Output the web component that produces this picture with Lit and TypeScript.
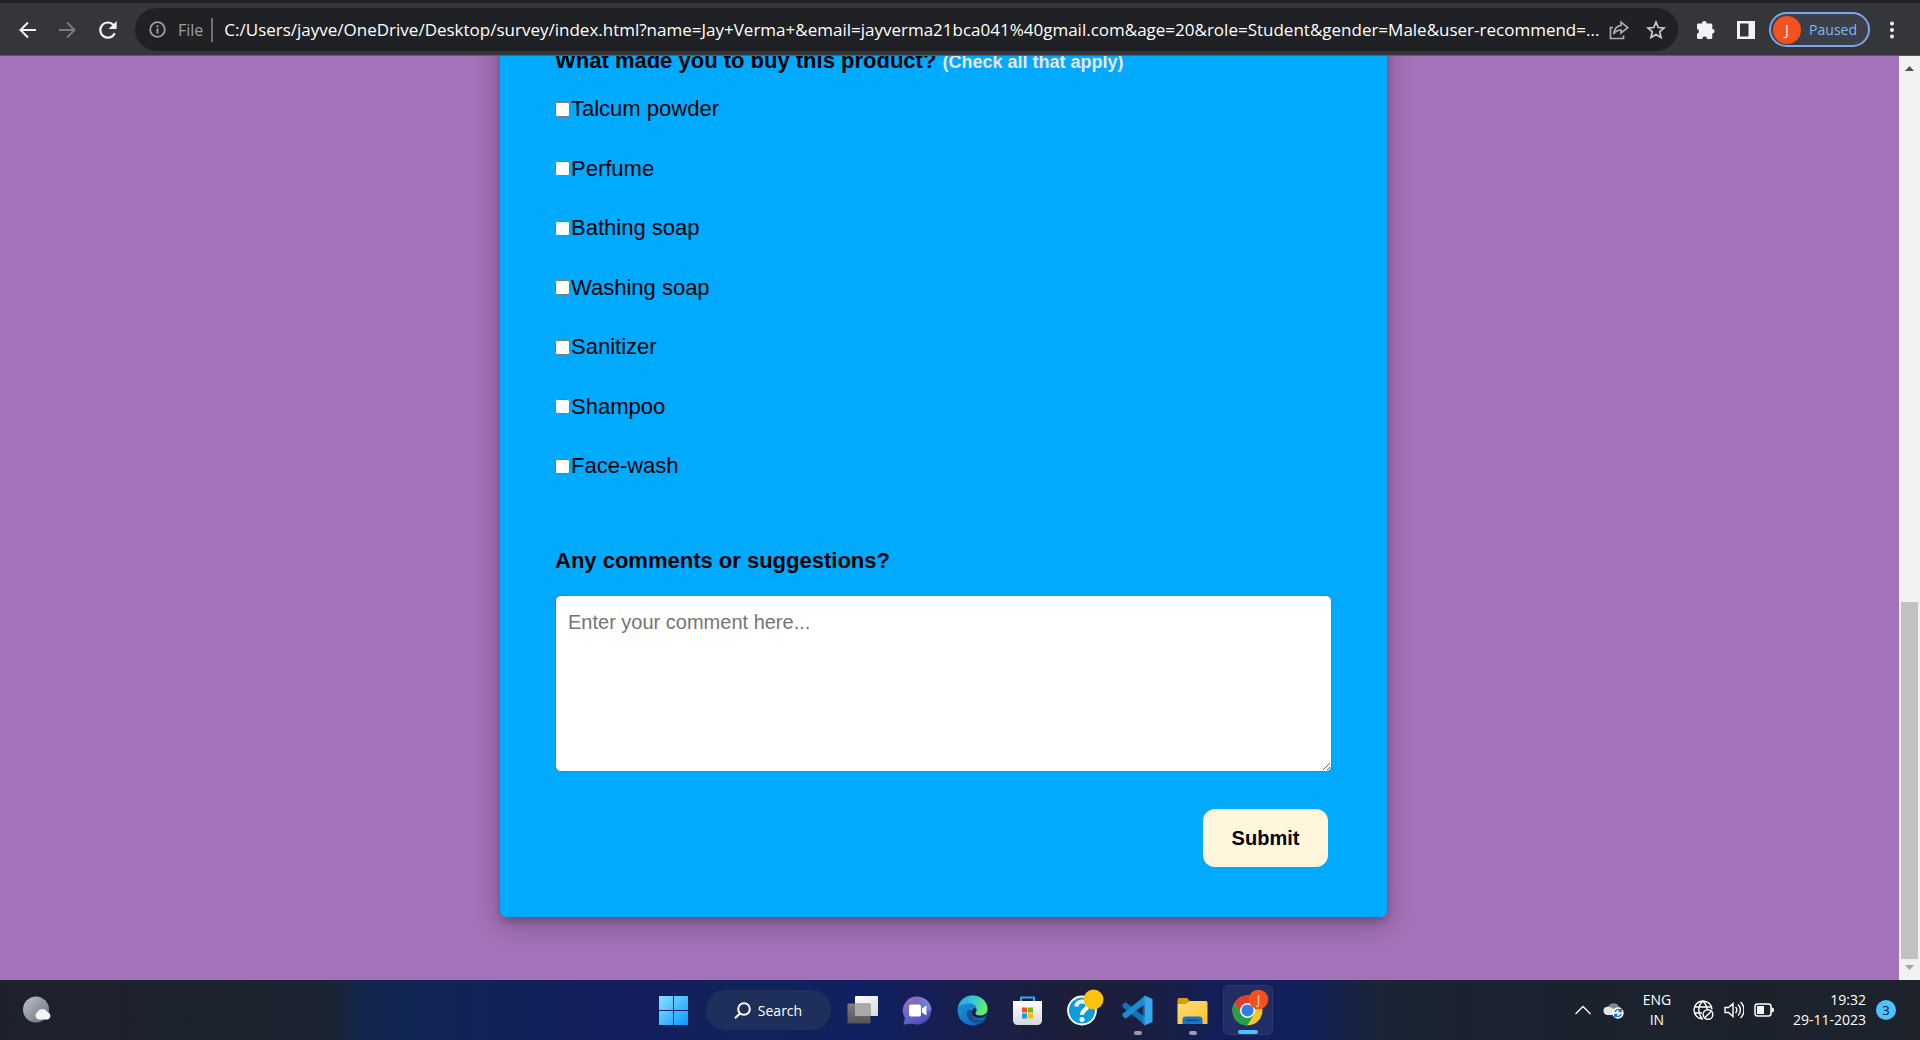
import { LitElement, html, svg, css } from "lit";
import { customElement } from "lit/decorators.js";

const OPTIONS = ["Talcum powder", "Perfume", "Bathing soap", "Washing soap", "Sanitizer", "Shampoo", "Face-wash"];
const ADDRESS =
  "C:/Users/jayve/OneDrive/Desktop/survey/index.html?name=Jay+Verma+&email=jayverma21bca041%40gmail.com&age=20&role=Student&gender=Male&user-recommend=...";

@customElement("browser-toolbar")
class BrowserToolbar extends LitElement {
  static styles = css`
    :host {
      display: block;
      font-family: "Open Sans", "Noto Sans", sans-serif;
    }
    .bar {
      display: flex;
      align-items: center;
      height: 56px;
      box-sizing: border-box;
      padding: 1px 12px 0 8px;
      background: #35363a;
      border-top: 3px solid #202124;
      border-bottom: 1px solid #5b5c5f;
    }
    button {
      display: flex;
      align-items: center;
      justify-content: center;
      width: 40px;
      height: 40px;
      flex: none;
      padding: 0;
      border: 0;
      background: none;
      font: inherit;
    }
    .address {
      flex: 1;
      min-width: 0;
      display: flex;
      align-items: center;
      height: 43px;
      margin: 0 8px 0 7px;
      padding: 0 2px 0 14px;
      border-radius: 22px;
      background: #202124;
    }
    .info {
      flex: none;
    }
    .scheme {
      margin-left: 12px;
      padding-right: 8px;
      border-right: 2px solid #6f7175;
      color: #9aa0a6;
      font-size: 16px;
      line-height: 24px;
    }
    .url {
      flex: 1;
      min-width: 0;
      height: 32px;
      margin-left: 11px;
      padding: 0;
      border: 0;
      outline: 0;
      background: none;
      color: #fff;
      font: 17px/32px "Open Sans", "Noto Sans", sans-serif;
    }
    .share {
      width: 34px;
    }
    .nav {
      display: flex;
    }
    .profile {
      width: 101px;
      height: 35px;
      margin: 0 6px 0 3px;
      padding: 0 11px 0 2px;
      justify-content: space-between;
      border: 2px solid #7ea6ee;
      border-radius: 18px;
      background: #3b3f49;
      color: #8ab4f8;
      font-size: 14px;
    }
    .avatar {
      display: grid;
      place-items: center;
      width: 28px;
      height: 28px;
      border-radius: 50%;
      background: #f4511e;
      color: #fff;
      font-size: 14px;
    }
    .menu {
      width: 32px;
    }
  `;

  render() {
    return html`
      <header class="bar">
        <nav class="nav">
          <button aria-label="Back">
            <svg width="20" height="20" viewBox="0 0 20 20" fill="none" stroke="#f1f3f4" stroke-width="2">
              <path d="M18 10H3M10 2.500 2.500 10l7.500 7.500" />
            </svg>
          </button>
          <button aria-label="Forward">
            <svg width="20" height="20" viewBox="0 0 20 20" fill="none" stroke="#797b7f" stroke-width="2">
              <path d="M1 10h15M9 2.500 16.500 10 9 17.500" />
            </svg>
          </button>
          <button aria-label="Reload">
            <svg width="20" height="20" viewBox="0 0 20 20">
              <path d="M16.800 13.200A7.600 7.600 0 1 1 15.500 5" fill="none" stroke="#f1f3f4" stroke-width="2.200" />
              <path d="M18.600 1v8h-8z" fill="#f1f3f4" />
            </svg>
          </button>
        </nav>
        <div class="address">
          <svg class="info" width="17" height="17" viewBox="0 0 17 17" fill="none" stroke="#9aa0a6" stroke-width="2">
            <circle cx="8.500" cy="8.500" r="7.300" stroke-width="1.800" />
            <path d="M8.500 7.500v5M8.500 4.300v2" />
          </svg>
          <span class="scheme">File</span>
          <input class="url" type="text" aria-label="Address" .value=${ADDRESS} />
          <button class="share" aria-label="Share">
            <svg width="20" height="20" viewBox="0 0 20 20" fill="none" stroke="#a8abaf" stroke-width="1.700">
              <path d="M4 7.500H1.500V18.500H14.500V15.500" />
              <path d="M12 2.200 18.700 7.600 12 13V10C8.500 10 6.500 11.200 4.700 14 5.300 9.500 7.500 6 12 5.400z" />
            </svg>
          </button>
          <button aria-label="Bookmark">
            <svg width="20" height="20" viewBox="0 0 20 20" fill="none" stroke="#c9cbce" stroke-width="1.700">
              <path d="M10 2.200l2.300 5.300 5.700.5-4.300 3.800 1.300 5.600-5-3-5 3 1.300-5.600L2 8l5.700-.5z" />
            </svg>
          </button>
        </div>
        <button aria-label="Extensions">
          <svg width="20" height="20" viewBox="0 0 20 20" fill="#f1f3f4">
            <path d="M8.300 1a2.300 2.300 0 0 1 2.300 2.500h4.200c.9 0 1.500.7 1.500 1.500v3.900a2.300 2.300 0 0 1 0 4.600v4c0 .9-.6 1.500-1.500 1.500h-3.700a2.400 2.400 0 0 0-4.800 0H2.500c-.9 0-1.500-.6-1.500-1.500v-3.700a2.400 2.400 0 0 0 0-4.700V5c0-.8.6-1.500 1.500-1.500H6A2.300 2.300 0 0 1 8.300 1z" />
          </svg>
        </button>
        <button aria-label="Side panel">
          <svg width="18" height="18" viewBox="0 0 18 18" fill="#f1f3f4" fill-rule="evenodd">
            <path d="M0 0h18v18H0zM3 2.500v13h8.500v-13z" />
          </svg>
        </button>
        <button class="profile"><span class="avatar">J</span>Paused</button>
        <button class="menu" aria-label="More">
          <svg width="4" height="18" viewBox="0 0 4 18" fill="#f1f3f4">
            <circle cx="2" cy="2.500" r="2" /><circle cx="2" cy="9" r="2" /><circle cx="2" cy="15.500" r="2" />
          </svg>
        </button>
      </header>
    `;
  }
}

@customElement("survey-page")
class SurveyPage extends LitElement {
  static styles = css`
    :host {
      display: flex;
      background: #a472b8;
      font-family: "Liberation Sans", Arial, sans-serif;
      color: #000;
    }
    .view {
      flex: 1;
      min-width: 0;
      overflow: hidden;
      display: grid;
      grid-template-columns: 500fr 887fr 512fr;
      align-content: end;
    }
    .card {
      grid-column: 2;
      box-sizing: border-box;
      margin: 0 0 63px;
      padding: 40px 55px 50px;
      border-radius: 6px;
      background: #00aaff;
      box-shadow: 0 4px 8px rgba(0, 0, 0, 0.2), 0 8px 28px rgba(0, 0, 0, 0.24);
    }
    fieldset {
      min-width: 0;
      margin: 0;
      padding: 0;
      border: 0;
    }
    .question {
      display: block;
      padding: 0;
      font-size: 22px;
      line-height: 28px;
      font-weight: 700;
    }
    .hint {
      font-size: 18px;
      color: #e6e6e6;
    }
    .options {
      display: grid;
      align-content: space-between;
      min-height: 385px;
      margin: 19px 0 67px;
    }
    .option {
      display: flex;
      align-items: center;
      gap: 1px;
      font-size: 22px;
      line-height: 28px;
    }
    .option input {
      width: 15px;
      height: 15px;
      margin: 0;
    }
    textarea {
      display: block;
      box-sizing: border-box;
      width: 100%;
      height: 177px;
      margin: 20px 0 37px;
      padding: 12px;
      border: 1px solid #767676;
      border-radius: 6px;
      background: #fff;
      font: 20px/28px "Liberation Sans", Arial, sans-serif;
      resize: both;
    }
    textarea::placeholder {
      color: #757575;
    }
    .actions {
      display: flex;
      justify-content: flex-end;
      padding-right: 4px;
    }
    .submit {
      width: 125px;
      height: 58px;
      border: 0;
      border-radius: 12px;
      background: #fff6dc;
      color: #000;
      font: 700 20px/28px "Liberation Sans", Arial, sans-serif;
    }
    .scroll {
      display: flex;
      flex-direction: column;
      align-items: center;
      width: 21px;
      box-sizing: border-box;
      padding: 10px 0;
      background: #f1f1f1;
    }
    .track {
      flex: 1;
      width: 17px;
      display: grid;
      grid-template-rows: 119fr 81fr;
      margin: 6px 0;
    }
    .thumb {
      grid-row: 2;
      background: #c1c1c1;
    }
  `;

  render() {
    return html`
      <main class="view">
        <form class="card" @submit=${(e: Event) => e.preventDefault()}>
          <fieldset>
            <legend class="question">
              What made you to buy this product? <span class="hint">(Check all that apply)</span>
            </legend>
            <div class="options">
              ${OPTIONS.map(
                (name) => html`<label class="option"><input type="checkbox" name="prefer" value=${name} />${name}</label>`
              )}
            </div>
          </fieldset>
          <label class="question" for="comments">Any comments or suggestions?</label>
          <textarea id="comments" placeholder="Enter your comment here..."></textarea>
          <div class="actions"><button class="submit" type="submit">Submit</button></div>
        </form>
      </main>
      <div class="scroll" aria-hidden="true">
        <svg width="9" height="5" viewBox="0 0 9 5"><path d="M0 5 4.500 0 9 5z" fill="#505050" /></svg>
        <div class="track"><div class="thumb"></div></div>
        <svg width="9" height="5" viewBox="0 0 9 5"><path d="M0 0 4.500 5 9 0z" fill="#a3a3a3" /></svg>
      </div>
    `;
  }
}

const windowsIcon = svg`
  <defs><linearGradient id="win" x1="0" y1="0" x2="1" y2="1"><stop offset="0" stop-color="#8be0ff"/><stop offset="1" stop-color="#0a9bff"/></linearGradient></defs>
  <path fill="url(#win)" d="M1 1h14v14H1zM16 1h14v14H16zM1 16h14v14H1zM16 16h14v14H16z"/>`;

const taskViewIcon = svg`
  <defs>
    <linearGradient id="tvb" x1="0" y1="0" x2="0" y2="1"><stop offset="0" stop-color="#7d7d7d"/><stop offset="1" stop-color="#555"/></linearGradient>
    <linearGradient id="tvf" x1="0" y1="0" x2="1" y2="1"><stop offset="0" stop-color="#fff"/><stop offset="1" stop-color="#dadada"/></linearGradient>
  </defs>
  <rect x="8" y="1" width="23" height="20" rx="1" fill="url(#tvf)"/>
  <rect x="0.500" y="8.500" width="23" height="20" rx="1" fill="url(#tvb)"/>
  <rect x="8" y="8.500" width="15.500" height="12.500" fill="#a9a9a9"/>`;

const chatIcon = svg`
  <defs><linearGradient id="chat" x1="0.100" y1="0" x2="0.700" y2="1"><stop offset="0" stop-color="#9a6fb5"/><stop offset="0.500" stop-color="#6a68c8"/><stop offset="1" stop-color="#4f4bb8"/></linearGradient>
  <linearGradient id="chat2" x1="0" y1="0" x2="1" y2="0"><stop offset="0" stop-color="#7b9bea" stop-opacity="0"/><stop offset="1" stop-color="#7ba0f0" stop-opacity=".7"/></linearGradient></defs>
  <path fill="url(#chat)" d="M15.500 1.500a14 14 0 1 1-5 27.200L1.500 29.500l1.500-6.500A14 14 0 0 1 15.500 1.500z"/>
  <path fill="url(#chat2)" d="M15.500 1.500a14 14 0 0 1 14 14H15.500z"/>
  <rect x="7" y="9.500" width="12" height="12" rx="2" fill="#fff"/>
  <path fill="#fff" d="M20 13.500 24.500 10.500v10L20 17.500z"/>`;

const edgeIcon = svg`
  <defs>
    <linearGradient id="e1" x1="0" y1="0" x2="1" y2="0.400"><stop offset="0" stop-color="#2b9fe0"/><stop offset="0.500" stop-color="#35c1d8"/><stop offset="1" stop-color="#66eb6e"/></linearGradient>
    <linearGradient id="e2" x1="0" y1="0" x2="0.700" y2="1"><stop offset="0" stop-color="#1b9de2"/><stop offset="1" stop-color="#1163c0"/></linearGradient>
  </defs>
  <circle cx="15.500" cy="15.500" r="15" fill="url(#e2)"/>
  <path fill="url(#e1)" d="M1 12C3 4.500 9 .5 15.500.5c9 0 15 6.500 15 13 0 4.500-3.300 7-7.300 7-3.700 0-5.200-1.500-5.200-2.500 0-.8 1.600-1.500 1.600-4.200 0-3.300-3.600-5.300-7.300-5.300C7.500 8.500 3 10 1 12z"/>
  <path fill="#174f93" d="M10 17c-1 7 5 11.500 11 11.500 3.500 0 6-1.500 7.700-4.500-3 1.500-7 1.500-10 0-3-1.500-4.700-4-3.700-8-2.500-2-4.500-1-5 1z"/>
  <path fill="#141c3c" d="M28.300 21.500c-4.800 2.600-11.800 1.500-13.300-2.500-.8-2.400.4-4.400 1.700-5.800 2.600-.4 3.800 1.300 1.900 4.300-1 1.700 1 3.300 4.600 3.300 3.300 0 5.500-1.300 7.500-3.700z"/>`;

const storeIcon = svg`
  <defs><linearGradient id="bag" x1="0" y1="0" x2="0" y2="1"><stop offset="0" stop-color="#fff"/><stop offset="1" stop-color="#d5d7da"/></linearGradient></defs>
  <path fill="none" stroke="#2aa9ee" stroke-width="2" d="M9 7V2.500h13V7"/>
  <path fill="url(#bag)" d="M1 6h29v19.500a4.500 4.500 0 0 1-4.500 4.500h-20A4.500 4.500 0 0 1 1 25.500z"/>
  <path fill="#f25022" d="M10 12.500h5v5h-5z"/><path fill="#7fba00" d="M16 12.500h5v5h-5z"/>
  <path fill="#00a4ef" d="M10 18.500h5v5h-5z"/><path fill="#ffb900" d="M16 18.500h5v5h-5z"/>`;

const helpIcon = svg`
  <circle cx="15" cy="15.500" r="14" fill="#0d9bdc" stroke="#fff" stroke-width="1.800"/>
  <path fill="none" stroke="#fff" stroke-width="4" d="M9.500 11.500c0-3.500 2.500-5 5.500-5s5.500 1.500 5.500 4.200c0 4-5.500 4-5.500 9"/>
  <circle cx="15" cy="24.500" r="2.500" fill="#fff"/>
  <circle cx="26.500" cy="4.500" r="10" fill="#ffc20e"/>`;

const codeIcon = svg`
  <path fill="#1173b8" d="M.5 9.500 3.500 7 23.500 22.500v8L.8 12.200z"/>
  <path fill="#1b8bd4" d="M.5 21 3.500 23.800 23.500 8.500V.5L.8 18.600z"/>
  <path fill="#36a6ee" d="M22.500.5 30.500 4v23l-8 3.500z"/>
  <path fill="#2496e2" d="M22.500.5 20.500 3v25l2 2.500z" opacity=".5"/>`;

const folderIcon = svg`
  <defs><linearGradient id="fold" x1="0" y1="0" x2="1" y2="1"><stop offset="0" stop-color="#ffe07a"/><stop offset="1" stop-color="#fcc02c"/></linearGradient></defs>
  <path fill="#dd9b08" d="M.5 4.500A1.500 1.500 0 0 1 2 3h8l3 3h-1l-2 3H.5z"/>
  <path fill="url(#fold)" d="M.5 9H9l3.500-3H29a1.500 1.500 0 0 1 1.500 1.500V29H.5z"/>
  <path fill="#1376cc" d="M5.500 29v-4.500a3 3 0 0 1 3-3h14a3 3 0 0 1 3 3V29z"/>
  <path stroke="#0b4f93" stroke-width="1.500" d="M9 25.300h13"/>`;

const chromeIcon = svg`
  <circle cx="15.500" cy="15.500" r="15" fill="#fbc727"/>
  <path fill="#e33b2e" d="M2.500 8A15 15 0 0 1 28.500 8H15.500L9 19.200z"/>
  <path fill="#2a9d4c" d="M2.500 8A15 15 0 0 0 15.500 30.500L22 19.200H9z"/>
  <circle cx="15.500" cy="15.500" r="7.500" fill="#fff"/><circle cx="15.500" cy="15.500" r="6" fill="#2f7de9"/>
  <circle cx="26.500" cy="4.500" r="9.800" fill="#f4511e"/>
  <text x="26.500" y="9" text-anchor="middle" font-size="12" fill="#ffd9cc">J</text>`;

const APPS = [
  { name: "Task view", icon: taskViewIcon, state: "" },
  { name: "Chat", icon: chatIcon, state: "" },
  { name: "Edge", icon: edgeIcon, state: "" },
  { name: "Store", icon: storeIcon, state: "" },
  { name: "Get help", icon: helpIcon, state: "" },
  { name: "Code", icon: codeIcon, state: "open" },
  { name: "Files", icon: folderIcon, state: "open" },
  { name: "Chrome", icon: chromeIcon, state: "active" },
];

@customElement("desktop-taskbar")
class DesktopTaskbar extends LitElement {
  static styles = css`
    :host {
      display: block;
      font-family: "Open Sans", "Noto Sans", sans-serif;
      color: #fff;
    }
    .bar {
      display: grid;
      grid-template-columns: 1fr auto 1fr;
      align-items: center;
      height: 60px;
      background: linear-gradient(
        90deg,
        #1e212b 0%,
        #1b222e 10%,
        #1b2531 17%,
        #11264f 19%,
        #112357 25%,
        #131d5e 33%,
        #11245a 39%,
        #101f62 45%,
        #171e4e 50%,
        #1c1f38 56%,
        #191e42 60%,
        #101f5c 64%,
        #12215a 68%,
        #1a2535 72%,
        #1a2230 76%,
        #1d222b 100%
      );
    }
    button {
      display: flex;
      align-items: center;
      justify-content: center;
      flex: none;
      padding: 0;
      border: 0;
      background: none;
      color: inherit;
      font: inherit;
    }
    .weather {
      margin-left: 22px;
    }
    .apps {
      display: flex;
      align-items: center;
      gap: 5px;
      padding-left: 1px;
    }
    .app {
      position: relative;
      box-sizing: border-box;
      width: 50px;
      height: 50px;
      border-radius: 6px;
    }
    .app svg {
      overflow: visible;
    }
    .app.active {
      background: #222d63;
      border: 1px solid #2f3a6c;
    }
    .app.open::after,
    .app.active::after {
      content: "";
      position: absolute;
      bottom: 0;
      width: 8px;
      height: 4px;
      border-radius: 2px;
      background: #9a9cae;
    }
    .app.active::after {
      width: 20px;
      background: #4cc2ff;
    }
    .search {
      gap: 7px;
      width: 125px;
      height: 40px;
      margin: 0 2px;
      border-radius: 20px;
      background: #1f2f5c;
      font-size: 14px;
    }
    .tray {
      display: flex;
      align-items: center;
      justify-content: flex-end;
      padding-right: 24px;
      font-size: 14px;
      line-height: 20px;
    }
    .cloud {
      margin-left: 12px;
    }
    .lang {
      width: 44px;
      margin: 0 14px 0 11px;
      text-align: center;
    }
    .status {
      gap: 10px;
      margin-right: 19px;
    }
    .clock {
      display: block;
      text-align: right;
    }
    .count {
      display: grid;
      place-items: center;
      width: 20px;
      height: 20px;
      margin-left: 10px;
      border-radius: 50%;
      background: #4cc2ff;
      color: #10202c;
      font-size: 13px;
    }
  `;

  render() {
    return html`
      <footer class="bar">
        <div>
          <button class="weather" aria-label="Weather">
            <svg width="30" height="28" viewBox="0 0 30 28">
              <defs>
                <linearGradient id="moon" x1="0" y1="0" x2="1" y2="1">
                  <stop offset="0" stop-color="#b9c2cc" /><stop offset="1" stop-color="#66707c" />
                </linearGradient>
              </defs>
              <circle cx="14" cy="13.500" r="13" fill="url(#moon)" />
              <path fill="#f2f4f7" d="M16 23.500a4.500 4.500 0 0 1 0-8 5.500 5.500 0 0 1 9.500.5 4 4 0 0 1 .5 7.500z" />
            </svg>
          </button>
        </div>
        <nav class="apps">
          <button class="app" aria-label="Start"><svg width="31" height="31" viewBox="0 0 31 31">${windowsIcon}</svg></button>
          <button class="search">
            <svg width="17" height="17" viewBox="0 0 17 17" fill="none" stroke="#fff" stroke-width="2">
              <circle cx="10" cy="7" r="5.800" /><path d="M6 11.500 1 16.300" />
            </svg>
            Search
          </button>
          ${APPS.map(
            (app) => html`<button class="app ${app.state}" aria-label=${app.name}>
              <svg width="31" height="31" viewBox="0 0 31 31">${app.icon}</svg>
            </button>`
          )}
        </nav>
        <div class="tray">
          <button aria-label="Show hidden icons">
            <svg width="16" height="10" viewBox="0 0 16 10" fill="none" stroke="#fff" stroke-width="1.300">
              <path d="M.5 9 8 1.500 15.500 9" />
            </svg>
          </button>
          <button class="cloud" aria-label="Cloud sync">
            <svg width="21" height="18" viewBox="0 0 21 18">
              <path fill="#85878b" d="M5 6a6 6 0 0 1 11-.5 4.500 4.500 0 0 1 1 8H9z" />
              <path fill="#e4e5e7" d="M4 14a4.200 4.200 0 0 1 0-8.300c3-.2 6 1 8 4l-1 4.300z" />
              <circle cx="15" cy="12" r="5.700" fill="#fff" />
              <path fill="none" stroke="#1271c9" stroke-width="1.400" d="M11.800 11a3.500 3.500 0 0 1 6-1.200M18.200 13a3.500 3.500 0 0 1-6 1.200M18.200 7.800v2.700h-2.700M11.800 16.200v-2.700h2.700" />
            </svg>
          </button>
          <button class="lang">ENG<br />IN</button>
          <button class="status" aria-label="Network, volume and battery">
            <svg width="21" height="20" viewBox="0 0 21 20" fill="none" stroke="#fff" stroke-width="1.400">
              <path d="M10 19A9 9 0 1 1 19 9.500M1.500 7h17M1.500 13H9M9 18.500C4.500 13 4.500 6 10 1c2.500 2.500 3.700 5 4 8" />
              <circle cx="15" cy="14.500" r="4.800" /><path d="M11.700 17.800 18.300 11.200" />
            </svg>
            <svg width="20" height="18" viewBox="0 0 20 18" fill="none" stroke="#fff" stroke-width="1.400">
              <path d="M1 6.500h3.500L9 2.500v13L4.500 11.500H1zM11.500 6a4 4 0 0 1 0 6M14 3.500a7.500 7.500 0 0 1 0 11M16.500 1a11 11 0 0 1 0 16" />
            </svg>
            <svg width="20" height="14" viewBox="0 0 20 14">
              <rect x="1" y="1" width="16" height="12" rx="2.500" fill="none" stroke="#fff" stroke-width="1.500" />
              <path fill="#fff" d="M3 3h7v8H3zM17.500 4.500c2 0 2.500 1 2.500 2.500s-.5 2.500-2.500 2.500z" />
            </svg>
          </button>
          <button class="clock">19:32<br />29-11-2023</button>
          <span class="count">3</span>
        </div>
      </footer>
    `;
  }
}

@customElement("app-root")
class AppRoot extends LitElement {
  static styles = css`
    :host {
      display: flex;
      flex-direction: column;
      height: 100vh;
      overflow: hidden;
    }
    .page {
      flex: 1;
      min-height: 0;
    }
  `;

  render() {
    return html`
      <browser-toolbar></browser-toolbar>
      <survey-page class="page"></survey-page>
      <desktop-taskbar></desktop-taskbar>
    `;
  }
}
